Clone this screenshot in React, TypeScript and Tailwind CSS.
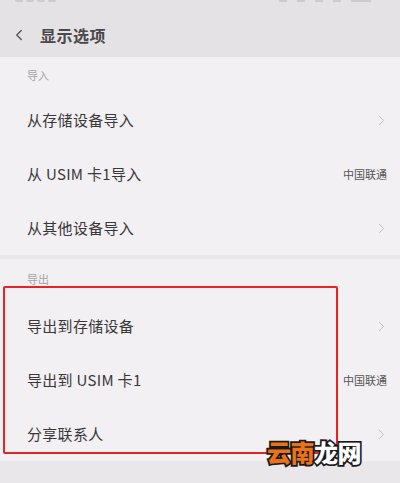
import { ChevronLeft, ChevronRight } from 'lucide-react'

const font = { fontFamily: '"Noto Sans CJK SC", "Noto Sans", sans-serif' }

type Row = { label: string; extra?: string }

const importRows: Row[] = [
  { label: '从存储设备导入' },
  { label: '从 USIM 卡1导入', extra: '中国联通' },
  { label: '从其他设备导入' },
]

const exportRows: Row[] = [
  { label: '导出到存储设备' },
  { label: '导出到 USIM 卡1', extra: '中国联通' },
  { label: '分享联系人' },
]

function ListRow({ row }: { row: Row }) {
  return (
    <div className="h-[54px] flex items-center justify-between pl-[27px] pr-[10px]">
      <span className="text-[15px] text-[#3a383a] tracking-[0.3px]">{row.label}</span>
      {row.extra ? (
        <span className="text-[11px] text-[#575557] mr-[3px]">{row.extra}</span>
      ) : (
        <ChevronRight className="w-[17px] h-[17px] text-[#c0bec0]" strokeWidth={1.4} />
      )}
    </div>
  )
}

function Section({ title, rows, labelH }: { title: string; rows: Row[]; labelH: string }) {
  return (
    <div className="bg-[#f2f0f2]">
      <div className={`${labelH} flex items-center pl-[27px]`}>
        <span className="text-[11px] text-[#a6a4a6]">{title}</span>
      </div>
      {rows.map((r) => (
        <ListRow key={r.label} row={r} />
      ))}
    </div>
  )
}

export default function App() {
  return (
    <div className="relative w-[400px] h-[483px] overflow-hidden bg-[#e9e7e9]" style={font}>
      {/* status bar, only the bottom edge shows */}
      <div className="h-[12px] bg-[#e4e2e4] flex justify-between items-start px-[15px]">
        <div className="flex gap-[3px]">
          <div className="w-[8px] h-[2px] bg-[#cdcbcd] rounded-b-sm" />
          <div className="w-[8px] h-[2px] bg-[#cdcbcd] rounded-b-sm" />
          <div className="w-[8px] h-[2px] bg-[#cdcbcd] rounded-b-sm" />
          <div className="w-[8px] h-[2px] bg-[#cdcbcd] rounded-b-sm" />
        </div>
        <div className="flex gap-[10px] mr-[14px]">
          <div className="w-[8px] h-[2px] bg-[#cdcbcd]" />
          <div className="w-[8px] h-[2px] bg-[#cdcbcd]" />
          <div className="w-[8px] h-[2px] bg-[#cdcbcd]" />
          <div className="w-[8px] h-[2px] bg-[#cdcbcd]" />
          <div className="w-[20px] h-[2px] bg-[#cdcbcd]" />
        </div>
      </div>

      {/* header */}
      <div className="h-[45px] bg-[#e4e2e4] flex items-center">
        <ChevronLeft className="w-[18px] h-[18px] ml-[10px] text-[#555355]" strokeWidth={1.8} />
        <span className="ml-[12px] text-[16px] font-bold text-[#4a484a] tracking-[0.5px]">显示选项</span>
      </div>

      <Section title="导入" rows={importRows} labelH="h-[36px]" />
      <div className="h-[4px] bg-[#e9e7e9]" />
      <Section title="导出" rows={exportRows} labelH="h-[40px]" />

      {/* highlight box */}
      <div className="absolute left-[3px] top-[286px] w-[335px] h-[168px] border-2 border-[#e62424] rounded-[2px]" />

      {/* watermark */}
      <div className="absolute left-[267px] top-[440px] text-[24px] font-black leading-none tracking-[-0.5px] [-webkit-text-stroke:3.5px_#1a1a1a] [paint-order:stroke_fill]">
        <span className="text-[#ea7218]">云南</span>
        <span className="text-white">龙网</span>
      </div>
    </div>
  )
}
